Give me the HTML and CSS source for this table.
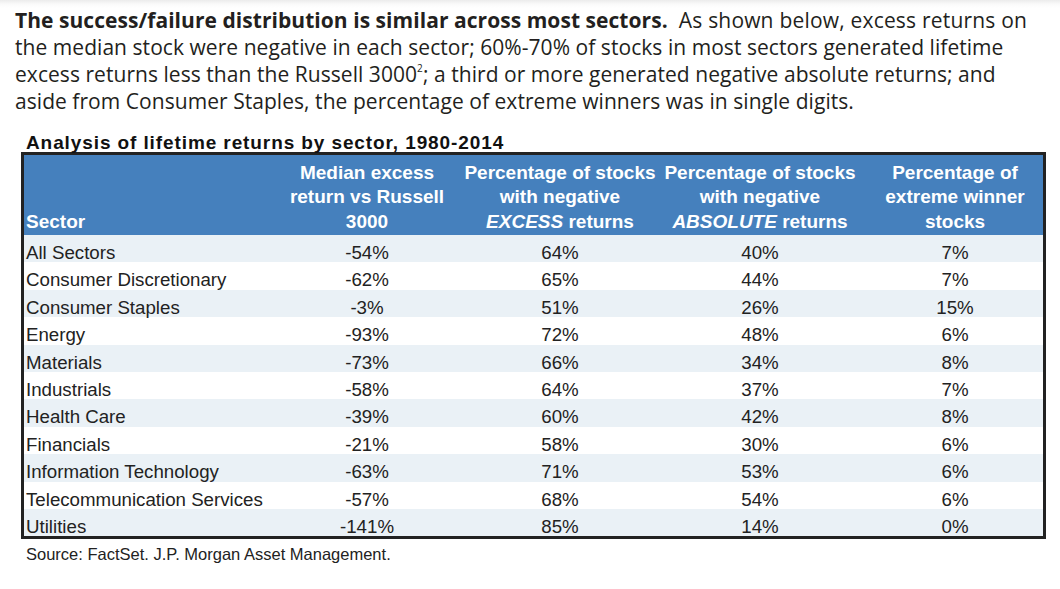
FILE: index.html
```html
<!DOCTYPE html>
<html>
<head>
<meta charset="utf-8">
<link rel="stylesheet" href="styles.css">
</head>
<body>
<div class="page">
  <p class="intro"><b>The success/failure distribution is similar across most sectors.</b>&nbsp; <span class="wide">As shown below, excess returns on</span><br>the median stock were negative in each sector; 60%-70% of stocks in most sectors generated lifetime<br>excess returns less than the Russell 3000<sup>2</sup>; a third or more generated negative absolute returns; and<br>aside from Consumer Staples, the percentage of extreme winners was in single digits.</p>
  <h2 class="title">Analysis of lifetime returns by sector, 1980-2014</h2>
  <div class="table">
    <div class="row head">
      <div class="c1">Sector</div>
      <div class="cc">Median excess<br>return vs Russell<br>3000</div>
      <div class="cc">Percentage of stocks<br>with negative<br><i>EXCESS</i> returns</div>
      <div class="cc">Percentage of stocks<br>with negative<br><i>ABSOLUTE</i> returns</div>
      <div class="cc c5">Percentage of<br>extreme winner<br>stocks</div>
    </div>
    <div class="row"><div class="c1">All Sectors</div><div class="cc">-54%</div><div class="cc">64%</div><div class="cc">40%</div><div class="cc c5">7%</div></div>
    <div class="row"><div class="c1">Consumer Discretionary</div><div class="cc">-62%</div><div class="cc">65%</div><div class="cc">44%</div><div class="cc c5">7%</div></div>
    <div class="row"><div class="c1">Consumer Staples</div><div class="cc">-3%</div><div class="cc">51%</div><div class="cc">26%</div><div class="cc c5">15%</div></div>
    <div class="row"><div class="c1">Energy</div><div class="cc">-93%</div><div class="cc">72%</div><div class="cc">48%</div><div class="cc c5">6%</div></div>
    <div class="row"><div class="c1">Materials</div><div class="cc">-73%</div><div class="cc">66%</div><div class="cc">34%</div><div class="cc c5">8%</div></div>
    <div class="row"><div class="c1">Industrials</div><div class="cc">-58%</div><div class="cc">64%</div><div class="cc">37%</div><div class="cc c5">7%</div></div>
    <div class="row"><div class="c1">Health Care</div><div class="cc">-39%</div><div class="cc">60%</div><div class="cc">42%</div><div class="cc c5">8%</div></div>
    <div class="row"><div class="c1">Financials</div><div class="cc">-21%</div><div class="cc">58%</div><div class="cc">30%</div><div class="cc c5">6%</div></div>
    <div class="row"><div class="c1">Information Technology</div><div class="cc">-63%</div><div class="cc">71%</div><div class="cc">53%</div><div class="cc c5">6%</div></div>
    <div class="row"><div class="c1">Telecommunication Services</div><div class="cc">-57%</div><div class="cc">68%</div><div class="cc">54%</div><div class="cc c5">6%</div></div>
    <div class="row"><div class="c1">Utilities</div><div class="cc">-141%</div><div class="cc">85%</div><div class="cc">14%</div><div class="cc c5">0%</div></div>
  </div>
  <p class="source">Source: FactSet. J.P. Morgan Asset Management.</p>
</div>
</body>
</html>
```
FILE: styles.css
```css
html, body {
  margin: 0;
  padding: 0;
  background: #ffffff;
}
.page {
  width: 1060px;
  height: 589px;
  overflow: hidden;
  background: linear-gradient(#ececec 0, #fafafa 4px, #ffffff 8px);
}
.intro {
  margin: 0;
  padding: 7px 0 0 15px;
  font-family: "Open Sans", "Noto Sans", sans-serif;
  font-size: 21px;
  letter-spacing: 0.05px;
  line-height: 27px;
  color: #231f20;
  white-space: nowrap;
}
.intro b {
  font-weight: 700;
}
.intro .wide {
  letter-spacing: 0.15px;
  word-spacing: 0.3px;
}
.intro sup {
  font-size: 10px;
  line-height: 0;
  vertical-align: 10px;
}
.title {
  margin: 19px 0 0 26px;
  font-family: "Liberation Sans", Arial, sans-serif;
  font-weight: 700;
  font-size: 19px;
  letter-spacing: 0.9px;
  line-height: 18px;
  color: #111;
}
.table {
  margin: 0 0 0 21px;
  width: 1019px;
  border: 3px solid #222;
  font-family: "Liberation Sans", Arial, sans-serif;
  font-size: 18.7px;
  color: #222;
}
.row {
  display: grid;
  grid-template-columns: 250px 186px 200px 200px 183px;
  height: 27.4px;
  align-items: center;
  line-height: 20px;
  padding-top: 8px;
  box-sizing: border-box;
}
.row:nth-child(even) {
  background: #eaf1f6;
}
.row:nth-child(odd) {
  background: #ffffff;
}
.row.head {
  height: 80px;
  background: #4580bd;
  color: #ffffff;
  font-weight: 700;
  font-size: 19px;
  align-items: end;
  line-height: 24.5px;
  padding: 0 0 1px 0;
}
.c1 {
  padding-left: 2px;
  white-space: nowrap;
}
.cc {
  text-align: center;
  white-space: nowrap;
}
.c5 {
  padding-left: 7px;
}
.source {
  margin: 6px 0 0 26px;
  font-family: "Liberation Sans", Arial, sans-serif;
  font-size: 16.5px;
  color: #222;
}
```
